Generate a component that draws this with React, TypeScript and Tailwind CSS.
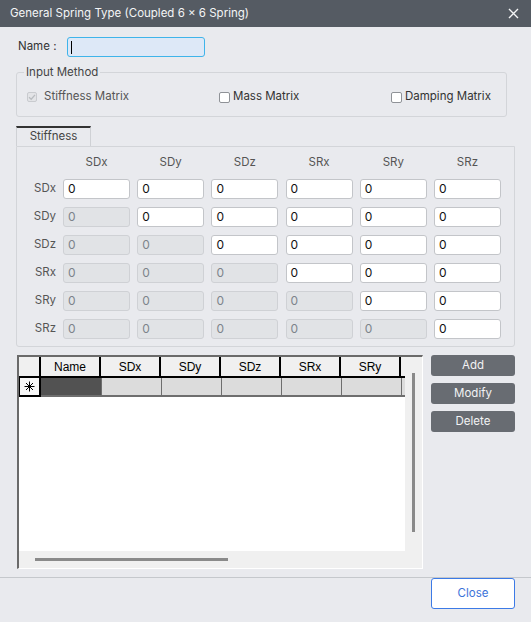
import React from "react";

const cols = ["SDx", "SDy", "SDz", "SRx", "SRy", "SRz"];

function Cell({ enabled }: { enabled: boolean }) {
  return (
    <div
      className={
        "h-[20px] w-[67px] rounded-[3px] border flex items-center pl-[4px] text-[12px] leading-none " +
        (enabled
          ? "bg-white border-[#c3c5c9] text-[#111]"
          : "bg-[#e1e3e6] border-[#cfd1d5] text-[#7d838b]")
      }
    >
      0
    </div>
  );
}

function Star() {
  return (
    <svg width="11" height="11" viewBox="0 0 11 11" className="block">
      <g stroke="#000" strokeWidth="1">
        <line x1="5.5" y1="0.5" x2="5.5" y2="10.5" />
        <line x1="0.5" y1="5.5" x2="10.5" y2="5.5" />
        <line x1="2" y1="2" x2="9" y2="9" />
        <line x1="9" y1="2" x2="2" y2="9" />
      </g>
    </svg>
  );
}

export default function App() {
  const font = { fontFamily: "Inter, 'Noto Sans', sans-serif" };
  return (
    <div
      className="w-[531px] h-[622px] bg-[#e9eaee] flex flex-col text-[#333] overflow-hidden"
      style={font}
    >
      {/* Title bar */}
      <div className="h-[27px] shrink-0 bg-[#555b63] flex items-center justify-between pl-[10px] pr-[12px]">
        <span className="text-[11.5px] text-[#f4f5f6]">General Spring Type (Coupled 6 × 6 Spring)</span>
        <svg width="11" height="11" viewBox="0 0 11 11">
          <path d="M1 1L10 10M10 1L1 10" stroke="#f4f5f6" strokeWidth="1.4" />
        </svg>
      </div>

      <div className="flex-1 flex flex-col px-[16px]">
        {/* Name */}
        <div className="mt-[10px] flex items-center h-[20px]">
          <span className="w-[51px] pl-[2px] text-[11.5px] text-[#333]">Name :</span>
          <div className="w-[138px] h-[20px] rounded-[3px] border border-[#3fb4ea] bg-[#dde8f7] flex items-center pl-[3px]">
            <div className="w-[1px] h-[13px] bg-black" />
          </div>
        </div>

        {/* Input method */}
        <fieldset className="mt-[7px] w-[491px] border border-[#d3d5d9] rounded-[3px] pb-[11px]">
          <legend className="ml-[7px] px-[2px] text-[11.5px] leading-[16px] text-[#444]">Input Method</legend>
          <div className="mt-[9px] h-[16px] flex items-center pl-[10px] text-[11.5px]">
            <div className="w-[192px] flex items-center">
              <div className="w-[10px] h-[10px] rounded-[2px] border border-[#c9cbcf] bg-[#e3e4e7] flex items-center justify-center">
                <svg width="8" height="8" viewBox="0 0 8 8">
                  <path d="M1 4.2L3.2 6.2L7 1.8" stroke="#b9bcc0" strokeWidth="1.3" fill="none" />
                </svg>
              </div>
              <span className="ml-[7px] text-[#555]">Stiffness Matrix</span>
            </div>
            <div className="w-[172px] flex items-center">
              <div className="w-[11px] h-[11px] rounded-[2px] border border-[#8f9297] bg-white" />
              <span className="ml-[3px]">Mass Matrix</span>
            </div>
            <div className="flex items-center">
              <div className="w-[11px] h-[11px] rounded-[2px] border border-[#8f9297] bg-white" />
              <span className="ml-[3px]">Damping Matrix</span>
            </div>
          </div>
        </fieldset>

        {/* Tab */}
        <div className="mt-[9px] w-[75px] h-[20px] border-t-2 border-[#333] border-x border-x-[#cfd1d5] flex items-center justify-center text-[11.5px] text-[#444]">
          Stiffness
        </div>
        <div className="w-[499px] border border-[#d3d5d9] rounded-b-[3px] pt-[8px] pb-[7px]">
          <div className="flex h-[16px] items-center">
            <div className="w-[46px]" />
            <div className="flex gap-x-[7.2px]">
              {cols.map((c) => (
                <div key={c} className="w-[67px] text-center text-[11.5px] text-[#555]">
                  {c}
                </div>
              ))}
            </div>
          </div>
          <div className="mt-[8px] flex flex-col gap-y-[8px]">
            {cols.map((r, ri) => (
              <div key={r} className="flex items-center">
                <div className="w-[39px] text-right text-[11.5px] text-[#555]">{r}</div>
                <div className="ml-[7px] flex gap-x-[7.2px]">
                  {cols.map((c, ci) => (
                    <Cell key={c} enabled={ci >= ri} />
                  ))}
                </div>
              </div>
            ))}
          </div>
        </div>

        {/* Grid + buttons */}
        <div className="mt-[8px] flex">
          <div
            className="ml-[1px] w-[406px] h-[214px] border-t-2 border-l-2 border-[#6a6a6a] border-r border-b border-r-white border-b-white flex flex-col"
            style={{ fontFamily: "'Liberation Sans', Arial, sans-serif" }}
          >
            <div className="flex-1 flex min-h-0">
              <div className="flex-1 bg-white flex flex-col overflow-hidden">
                <div className="flex h-[21px] text-[12px] text-black">
                  <div className="w-[22px] shrink-0 bg-[#f0f0f0] border-r-2 border-b-2 border-black" />
                  {["Name", "SDx", "SDy", "SDz", "SRx", "SRy"].map((h) => (
                    <div
                      key={h}
                      className="w-[60px] shrink-0 bg-[#f0f0f0] border-r-2 border-b-2 border-black flex items-center justify-center"
                    >
                      {h}
                    </div>
                  ))}
                  <div className="flex-1 bg-[#f0f0f0] border-b-2 border-black" />
                </div>
                <div className="flex h-[19px]">
                  <div className="w-[22px] shrink-0 bg-[#f7f7f7] border-r-2 border-b-2 border-l border-black flex items-center justify-center">
                    <Star />
                  </div>
                  <div className="w-[60px] shrink-0 bg-[#525252] border-b-2 border-[#6e6e6e]" />
                  {[0, 1, 2, 3, 4].map((i) => (
                    <div key={i} className="w-[60px] shrink-0 bg-[#dcdcdc] border-l border-b-2 border-[#6e6e6e]" />
                  ))}
                  <div className="flex-1 bg-[#dcdcdc] border-l border-b-2 border-[#6e6e6e]" />
                </div>
              </div>
              <div className="w-[17px] shrink-0 bg-[#f0f0f0] flex justify-center pt-[16px] pb-[19px]">
                <div className="w-[3px] h-[159px] bg-[#8a8a8a]" />
              </div>
            </div>
            <div className="h-[17px] shrink-0 bg-[#f0f0f0] flex items-center pl-[16px]">
              <div className="w-[193px] h-[3px] bg-[#8a8a8a]" />
            </div>
          </div>
          <div className="ml-[8px] flex flex-col gap-y-[7px]">
            {["Add", "Modify", "Delete"].map((b) => (
              <div
                key={b}
                className="w-[84px] h-[21px] rounded-[3px] bg-[#686c72] text-[#f2f3f4] text-[11.5px] flex items-center justify-center"
              >
                {b}
              </div>
            ))}
          </div>
        </div>
      </div>

      {/* Footer */}
      <div className="h-[45px] shrink-0 border-t border-[#c5c8cc] flex justify-end pr-[16px]">
        <div className="w-[84px] h-[31px] rounded-[3px] border-[1.5px] border-[#3c7ae6] bg-white text-[#3b73d9] text-[11.5px] flex items-center justify-center">
          Close
        </div>
      </div>
    </div>
  );
}
